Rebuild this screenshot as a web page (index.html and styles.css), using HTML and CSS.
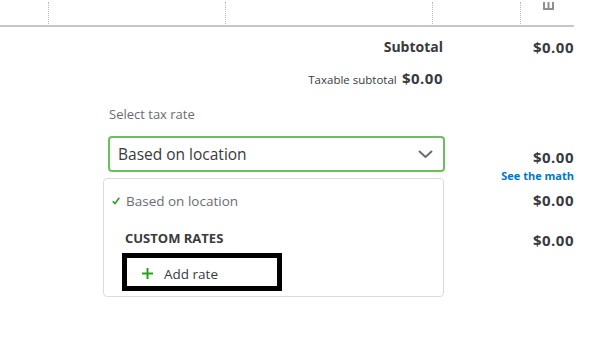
FILE: index.html
```html
<!DOCTYPE html>
<html lang="en">
<head>
    <meta charset="UTF-8">
    <meta name="viewport" content="width=device-width, initial-scale=1.0">
    <title>Invoice totals</title>
    <link rel="stylesheet" href="styles.css">
</head>
<body>

<div class="line-head">
    <div class="col c1"></div>
    <div class="col c2"></div>
    <div class="col c3"></div>
    <div class="col c4"></div>
    <div class="col c5">
        <svg class="trash" width="11" height="8" viewBox="0 0 11 8">
            <rect x="0" y="0" width="2" height="8" fill="#8d9096"/>
            <rect x="4.5" y="0" width="2" height="8" fill="#8d9096"/>
            <rect x="9" y="0" width="2" height="8" fill="#8d9096"/>
            <rect x="0" y="6" width="11" height="2" fill="#8d9096"/>
        </svg>
    </div>
</div>

<div class="totals">
    <div class="row subtotal">
        <div class="label">Subtotal</div>
        <div class="amount">$0.00</div>
    </div>

    <div class="row taxable">
        <div class="label"><span class="small">Taxable subtotal</span> <span class="big">$0.00</span></div>
        <div class="amount"></div>
    </div>

    <div class="row tax-row">
        <div class="tax-picker">
            <div class="field-label">Select tax rate</div>
            <div class="select-wrap">
                <div class="select">
                    <span>Based on location</span>
                    <svg class="chevron" width="15" height="8" viewBox="0 0 15 8">
                        <path d="M1 1 L7.5 7 L14 1" fill="none" stroke="#6b6c72" stroke-width="2"/>
                    </svg>
                </div>
                <div class="menu">
                    <div class="option selected">
                        <svg class="check" width="8" height="8" viewBox="0 0 8 8">
                            <path d="M0.7 4.2 L3 6.6 L7.3 0.8" fill="none" stroke="#2ca01c" stroke-width="1.6"/>
                        </svg>
                        Based on location
                    </div>
                    <div class="group">CUSTOM RATES</div>
                    <div class="option add">
                        <svg class="plus" width="11" height="11" viewBox="0 0 11 11">
                            <rect x="4.5" y="0" width="2" height="11" fill="#2ca01c"/>
                            <rect x="0" y="4.5" width="11" height="2" fill="#2ca01c"/>
                        </svg>
                        Add rate
                    </div>
                </div>
            </div>
        </div>
        <div class="tax-amounts">
            <div class="amount">$0.00</div>
            <a class="math" href="#">See the math</a>
            <div class="amount second">$0.00</div>
            <div class="amount third">$0.00</div>
        </div>
    </div>
</div>

</body>
</html>
```

FILE: styles.css
```css
body {
    font-family: "Open Sans", Arial, sans-serif;
    color: #393a3d;
    background-color: #fff;
    margin: 0;
    width: 592px;
    height: 339px;
    overflow: hidden;
}

/* table header stub */

.line-head {
    display: flex;
    width: 574px;
    height: 25px;
    border-bottom: 2px solid #c6c6c6;
}

.col {
    margin-top: 2px;
    height: 22px;
    border-right: 1px dotted #b9b9b9;
}

.c1 { width: 48px; }
.c2 { width: 176px; }
.c3 { width: 206px; }
.c4 { width: 87px; }

.c5 {
    flex: 1;
    border-right: none;
}

.trash {
    display: block;
    margin-left: 22px;
}

/* totals */

.totals {
    width: 574px;
}

.row {
    display: grid;
    grid-template-columns: 444px 130px;
}

.label {
    text-align: right;
    padding-right: 1px;
}

.amount {
    text-align: right;
    font-weight: 700;
    font-size: 15px;
    letter-spacing: 0.5px;
}

.subtotal {
    margin-top: 10px;
    line-height: 20px;
}

.subtotal .label {
    font-weight: 700;
    font-size: 14px;
}

.taxable {
    margin-top: 10px;
    line-height: 22px;
}

.taxable .small {
    font-size: 11.5px;
}

.taxable .big {
    font-size: 15px;
    font-weight: 700;
    letter-spacing: 0.5px;
    margin-left: 1px;
}

/* tax picker */

.tax-picker {
    padding-left: 108px;
    padding-top: 14px;
}

.field-label {
    font-size: 13px;
    line-height: 18px;
    color: #6b6c72;
    padding-left: 1px;
}

.select-wrap {
    position: relative;
    margin-top: 13px;
    width: 337px;
}

.select {
    display: flex;
    align-items: center;
    justify-content: space-between;
    height: 32px;
    padding: 0 10px 0 8px;
    border: 2px solid #6cc05c;
    border-radius: 4px;
    font-size: 15.5px;
}

.menu {
    position: absolute;
    left: -5px;
    top: 42px;
    width: 339px;
    height: 117px;
    border: 1px solid #dcdcdc;
    border-radius: 4px;
    background-color: #fff;
}

.option {
    display: flex;
    align-items: center;
    font-size: 13.5px;
    color: #6b6c72;
}

.selected {
    margin-top: 13px;
    padding-left: 8px;
    line-height: 18px;
}

.check {
    margin-right: 6px;
}

.group {
    margin-top: 20px;
    padding-left: 21px;
    font-size: 13px;
    font-weight: 700;
    line-height: 16px;
}

.add {
    margin-top: 7px;
    margin-left: 18px;
    width: 150px;
    height: 25px;
    padding-top: 3px;
    border: 5px solid #000;
    color: #393a3d;
}

.plus {
    margin-left: 15px;
    margin-right: 11px;
}

/* amounts beside the picker */

.tax-amounts {
    display: flex;
    flex-direction: column;
    align-items: flex-end;
    padding-top: 56px;
}

.tax-amounts .amount {
    line-height: 20px;
}

.math {
    margin-top: 2px;
    font-size: 11px;
    font-weight: 700;
    color: #0077c5;
    text-decoration: none;
    line-height: 14px;
}

.second {
    margin-top: 7px;
}

.third {
    margin-top: 20px;
}
```
